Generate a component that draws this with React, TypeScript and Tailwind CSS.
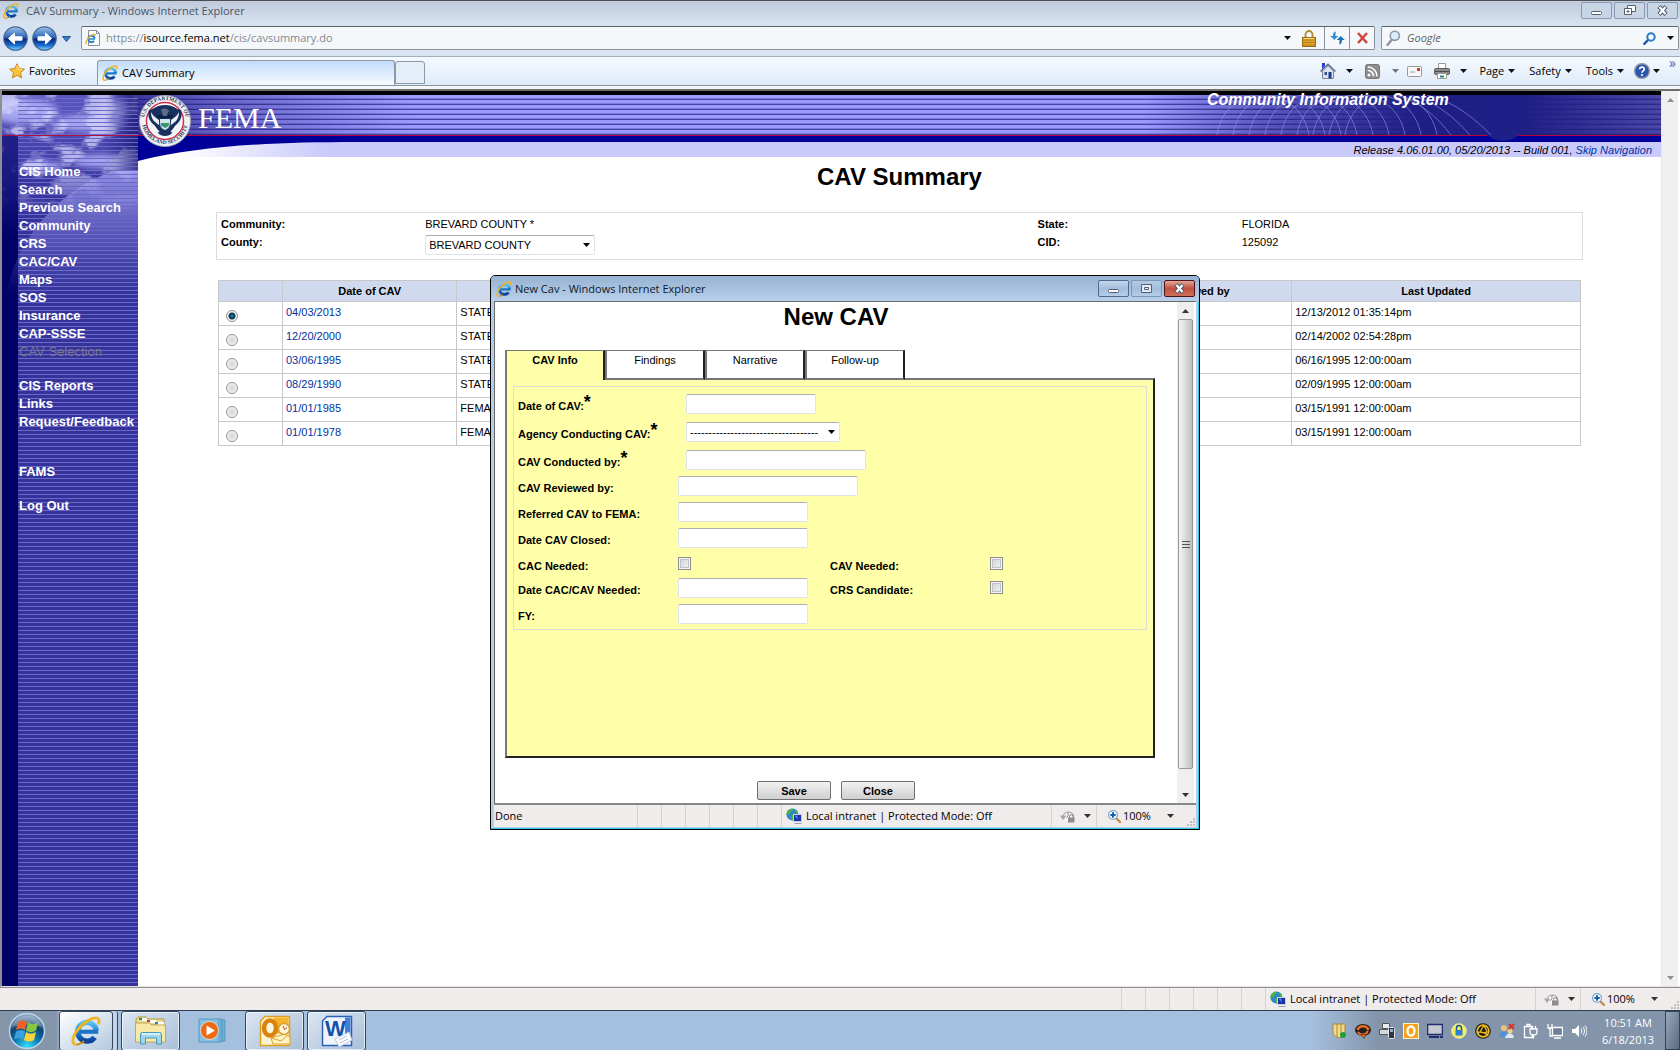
import React, { useState } from 'react';

const UI = "font-['Open_Sans','Noto_Sans',sans-serif]";
const ARIAL = "font-['Liberation_Sans',Arial,sans-serif]";

/* ---------- Icons ---------- */

const Caret = ({ color = '#111' }: { color?: string }) => (
  <svg width="7" height="4" viewBox="0 0 7 4" className="shrink-0" aria-hidden="true">
    <path d="M0 0h7L3.5 4z" fill={color} />
  </svg>
);

const IeIcon = ({ size = 16 }: { size?: number }) => (
  <svg width={size} height={size} viewBox="0 0 16 16" className="shrink-0" aria-hidden="true">
    <defs>
      <linearGradient id="ieBlue" x1="0" y1="0" x2="0" y2="1">
        <stop offset="0" stopColor="#5cc4f4" />
        <stop offset="0.55" stopColor="#1a7fd0" />
        <stop offset="1" stopColor="#0b3f93" />
      </linearGradient>
    </defs>
    <circle cx="8.6" cy="8.4" r="5" fill="none" stroke="url(#ieBlue)" strokeWidth="2.9" strokeDasharray="27.3 4.1" strokeDashoffset="-3.2" />
    <rect x="4.6" y="7.3" width="9.9" height="2.2" fill="#1b74c6" />
    <path d="M3 15.2C.2 15.6.4 11.6 3.2 7.8 6.200 3.500 11.800.2 14.200 1.200c1 .5 1 1.800.3 3.200" fill="none" stroke="#f0b323" strokeWidth="1.500" />
    <path d="M3 15.200c1.200 0 2.800-.9 4-1.900" fill="none" stroke="#c98a10" strokeWidth="1" />
  </svg>
);

const PageIcon = () => (
  <svg width="16" height="16" viewBox="0 0 16 16" aria-hidden="true">
    <path d="M3.500.5h8l3 3v12h-11z" fill="#fdfdfd" stroke="#8b8f95" />
    <path d="M11.500.5v3h3" fill="none" stroke="#8b8f95" />
    <circle cx="6.500" cy="9" r="3.200" fill="none" stroke="#2282cf" strokeWidth="2" strokeDasharray="17 3" strokeDashoffset="-2" />
    <path d="M4 9h6" stroke="#2282cf" strokeWidth="1.500" />
    <path d="M1.500 14C0 13 2 9 5 6.500S10.500 3.800 10.500 5.500" fill="none" stroke="#eeae20" strokeWidth="1.300" />
  </svg>
);

const NavButton = ({ label, flip }: { label: string; flip?: boolean }) => (
  <button aria-label={label} className="h-[25px] w-[25px] shrink-0">
    <svg width="25" height="25" viewBox="0 0 25 25" aria-hidden="true" className={flip ? '-scale-x-100' : ''}>
      <defs>
        <linearGradient id="navBlue" x1="0" y1="0" x2="0" y2="1">
          <stop offset="0" stopColor="#9ec3ea" />
          <stop offset="0.45" stopColor="#2b65b8" />
          <stop offset="0.52" stopColor="#06247a" />
          <stop offset="0.8" stopColor="#1c6fd0" />
          <stop offset="1" stopColor="#7fe0ff" />
        </linearGradient>
      </defs>
      <circle cx="12.500" cy="12.500" r="11.700" fill="url(#navBlue)" stroke="#4a6791" strokeWidth="1.200" />
      <path d="M5.500 12.500L11.500 7v3.800h7.500v3.400h-7.500V18z" fill="#fff" stroke="#fff" strokeLinejoin="round" />
    </svg>
  </button>
);

const Magnifier = ({ color, glass }: { color: string; glass: string }) => (
  <svg width="15" height="16" viewBox="0 0 15 16" aria-hidden="true">
    <path d="M5.500 10L1.500 15" stroke={color} strokeWidth="2.400" strokeLinecap="round" />
    <circle cx="8.800" cy="5.800" r="4.600" fill={glass} stroke={color} strokeWidth="1.600" />
  </svg>
);

const BlueGlass = () => (
  <svg width="13" height="13" viewBox="0 0 13 13" aria-hidden="true">
    <path d="M5 8L1.300 11.800" stroke="#1d5a9f" strokeWidth="2.400" strokeLinecap="round" />
    <circle cx="8" cy="5" r="3.700" fill="#f5fbff" stroke="#2478c4" strokeWidth="2" />
  </svg>
);

const LockIcon = () => (
  <svg width="14" height="17" viewBox="0 0 14 17" aria-hidden="true">
    <path d="M3.500 8V4.500a3.500 3.500 0 017 0V8" fill="none" stroke="#b08a2e" strokeWidth="1.800" />
    <rect x="0.500" y="7.500" width="13" height="9" fill="#e0a52c" stroke="#9c6c10" />
    <path d="M1 10h12M1 12.500h12M1 15h12" stroke="#b97f18" />
    <path d="M2 8.500h10" stroke="#ffe08a" />
  </svg>
);

const RefreshIcon = () => (
  <svg width="15" height="14" viewBox="0 0 15 14" aria-hidden="true">
    <path d="M6 .5C3.500 1 3 2.500 3 5H.3l4 4 4-4H5.500c0-1.500-.2-3 .5-4.500z" fill="#2f8edb" />
    <path d="M9 13.500c2.500-.5 3-2 3-4.500h2.700l-4-4-4 4h2.800c0 1.500.2 3-.5 4.500z" fill="#1f6cb8" />
  </svg>
);

const StarIcon = () => (
  <svg width="16" height="16" viewBox="0 0 16 16" aria-hidden="true">
    <path d="M8 .8l2.200 4.800 5.200.6-3.900 3.500 1.100 5.200L8 12.300l-4.600 2.600 1.100-5.200L.6 6.200l5.200-.6z" fill="#fbc437" stroke="#c9811a" />
    <path d="M8 2.500l1.500 3.700 3.500.5" fill="none" stroke="#fff0ae" />
  </svg>
);

const HomeIcon = () => (
  <svg width="16" height="16" viewBox="0 0 16 16" aria-hidden="true">
    <path d="M2.500 8v7.500h11V8L8 2.500z" fill="#dbe1ee" stroke="#7f8796" />
    <path d="M.5 8.500L8 1.200l7.500 7.300" fill="none" stroke="#5a6a90" strokeWidth="1.500" />
    <path d="M2 0h3v3L2 6z" fill="#2b3ccf" />
    <path d="M8.500 9h3v6.500h-3z" fill="#173b8c" />
    <path d="M4.500 9h2.500v3H4.500z" fill="#2e4f8f" />
  </svg>
);

const RssIcon = () => (
  <svg width="15" height="15" viewBox="0 0 15 15" aria-hidden="true">
    <rect x="0.500" y="0.500" width="14" height="14" rx="2" fill="#8d8d8d" stroke="#777" />
    <circle cx="4" cy="11" r="1.500" fill="#fff" />
    <path d="M2.800 6.500a5.700 5.700 0 015.700 5.700M2.800 3a9.200 9.200 0 019.200 9.200" fill="none" stroke="#fff" strokeWidth="1.600" />
  </svg>
);

const MailIcon = () => (
  <svg width="15" height="11" viewBox="0 0 15 11" aria-hidden="true">
    <rect x="0.500" y="0.500" width="14" height="10" rx="1" fill="#f7f7f7" stroke="#9a9a9a" />
    <rect x="10" y="2" width="3" height="3" fill="#d8392b" />
    <path d="M3 6h5" stroke="#9a9a9a" />
  </svg>
);

const PrinterIcon = () => (
  <svg width="16" height="16" viewBox="0 0 16 16" aria-hidden="true">
    <path d="M4.500.5h7v6h-7z" fill="#fff" stroke="#999" />
    <rect x="0.500" y="5.500" width="15" height="6" rx="1.500" fill="#8b8b8b" stroke="#5f5f5f" />
    <path d="M1 8.500h14" stroke="#4a4a4a" />
    <path d="M3.500 10.500h9v5h-9z" fill="#fff" stroke="#999" />
    <path d="M6 12.500h2v2H6z" fill="#2775c9" />
    <path d="M8 12.500h2v2H8z" fill="#2fa04a" />
  </svg>
);

const HelpIcon = () => (
  <svg width="16" height="16" viewBox="0 0 16 16" aria-hidden="true">
    <circle cx="8" cy="8" r="7.300" fill="#2a55b0" stroke="#8d93a3" strokeWidth="1.400" />
    <path d="M5.600 6.200c.2-3 5-2.700 4.700 0-.2 1.700-2.300 1.600-2.300 3.500" fill="none" stroke="#fff" strokeWidth="1.700" />
    <circle cx="8" cy="12" r="1.100" fill="#fff" />
  </svg>
);

const IntranetIcon = () => (
  <svg width="17" height="16" viewBox="0 0 17 16" aria-hidden="true">
    <circle cx="6.500" cy="6.500" r="6" fill="#2f86c4" />
    <path d="M2 2.500c2-2 4-2 5-1.300C6 3 4 3.500 3.500 6 2 6 1 7 1 8 0 6 .5 4 2 2.500zM6 7c2-1 3 0 3 2l-3 3.500c-1-1-1-4 0-5.500zM9 1.500c2 1 3 3 3 5-2 0-3-3-3-5z" fill="#48b548" />
    <rect x="7.500" y="6.500" width="8" height="7" fill="#1733a8" stroke="#c7d0dd" />
    <path d="M8.500 7.500h3v4z" fill="#5f83e6" />
    <path d="M9 15h6l1 1H8z" fill="#9aa3ae" />
  </svg>
);

const ProtectedIcon = () => (
  <svg width="16" height="14" viewBox="0 0 16 14" aria-hidden="true">
    <path d="M3 8a5.500 5.500 0 0110.500-1.500A5.500 5.500 0 018 13" fill="#fafafa" stroke="#a9a9a9" strokeWidth="1.200" />
    <path d="M8 3v4l-2 2" fill="none" stroke="#8b8b8b" />
    <path d="M0 6.500h6.500L3 11z" fill="#a5a5a5" />
    <path d="M9.500 9V7.500a1.800 1.800 0 013.600 0V9" fill="none" stroke="#777" />
    <rect x="8" y="8.500" width="6.500" height="5" fill="#8d8d8d" />
  </svg>
);

const ZoomIcon = () => (
  <svg width="13" height="13" viewBox="0 0 13 13" aria-hidden="true">
    <path d="M8 8l4 4" stroke="#c48a4a" strokeWidth="2.400" strokeLinecap="round" />
    <circle cx="5" cy="5" r="4.400" fill="#fff" stroke="#7fa3cc" strokeWidth="1.200" />
    <path d="M5 2.300v5.400M2.300 5h5.400" stroke="#1760b8" strokeWidth="2" />
  </svg>
);

const Seal = () => (
  <svg width="52" height="52" viewBox="0 0 52 52" className="shrink-0" aria-hidden="true">
    <defs>
      <path id="sealTop" d="M6.200 33A21 21 0 1145.800 33" />
      <path id="sealBottom" d="M3.200 29A23 23 0 0048.800 29" />
    </defs>
    <circle cx="26" cy="26" r="25.500" fill="#f2f2f2" stroke="#a7a9b0" />
    <circle cx="26" cy="26" r="18.500" fill="#fff" stroke="#d0304c" strokeWidth="1.500" />
    <circle cx="26" cy="26" r="16.500" fill="#f0f4f8" />
    <path d="M10 15c4 0 7-5 16-5s12 5 16 5c2 7-1 11-4 14-3 2-4 5-5 9-3 4-11 4-14 0-1-4-2-7-5-9-3-3-6-7-4-14z" fill="#17305e" />
    <path d="M12 17c0 8 4 10 8 13l3-2c-3-4-8-5-11-11zM40 17c0 8-4 10-8 13l-3-2c3-4 8-5 11-11z" fill="#e9eef5" />
    <path d="M18 20h16v3H18z" fill="#0c2148" />
    <path d="M22 15c1-2 6-2 7 0l2 1-2 1-1 4h-4z" fill="#5d6c88" />
    <path d="M20.500 23.500h11v5c0 4-3 6-5.500 7-2.500-1-5.500-3-5.500-7z" fill="#cfe5e8" stroke="#17305e" />
    <path d="M21.500 28h9l-1 3-3 2-4-2z" fill="#3f9a5a" />
    <path d="M21.500 29h4v3z" fill="#2d86c0" />
    <path d="M15 32l5 5M37 32l-5 5" stroke="#fff" strokeWidth="1.500" />
    <text fontFamily="Liberation Serif" fontSize="5.500" fontWeight="bold" fill="#26355c">
      <textPath href="#sealTop" startOffset="50%" textAnchor="middle">U.S. DEPARTMENT OF</textPath>
    </text>
    <text fontFamily="Liberation Serif" fontSize="5.500" fontWeight="bold" fill="#26355c">
      <textPath href="#sealBottom" startOffset="50%" textAnchor="middle">HOMELAND SECURITY</textPath>
    </text>
  </svg>
);

/* ---------- Window chrome ---------- */

const glyphs = {
  min: <rect x="3.500" y="8.500" width="10" height="3" rx="1" fill="#fff" stroke="#555d70" />,
  restore: (
    <g fill="#fff" stroke="#555d70">
      <path d="M6.500 2.500h8v6h-8z" />
      <path d="M3.500 5.500h7v6h-7z" />
      <path d="M6 8h2v1H6z" />
    </g>
  ),
  max: (
    <g fill="#e4ecf6" stroke="#555d70">
      <path d="M3.500 3.500h10v8h-10z" />
      <path d="M6.500 6.500h4v2h-4z" />
    </g>
  ),
  close: (
    <g>
      <path d="M5 3.500l7 8M12 3.500l-7 8" stroke="#555d70" strokeWidth="4.200" />
      <path d="M5.500 4l6 7M11.500 4l-6 7" stroke="#fff" strokeWidth="2.200" />
    </g>
  ),
};

const WindowButton = ({ kind, label, className }: { kind: keyof typeof glyphs; label: string; className: string }) => (
  <button aria-label={label} className={`flex h-[17px] w-[31px] items-center justify-center rounded-[2px] border ${className}`}>
    <svg width="17" height="15" viewBox="0 0 17 15" aria-hidden="true">{glyphs[kind]}</svg>
  </button>
);

const TitleBar = () => (
  <div className="flex h-6 items-start justify-between border-t border-[#4b4d52] bg-linear-to-b from-[#bfcbdb] to-[#d6e2f0] pr-[2px] pl-[3px]">
    <div className="flex items-center gap-[7px] pt-px">
      <IeIcon />
      <span className="text-[11px] leading-[18px] text-[#4c5663]">CAV Summary - Windows Internet Explorer</span>
    </div>
    <div className="flex gap-[2px] pt-px">
      <WindowButton kind="min" label="Minimize" className="border-[#8996b4] bg-[#c8d5e5]" />
      <WindowButton kind="restore" label="Restore" className="border-[#8996b4] bg-[#c8d5e5]" />
      <WindowButton kind="close" label="Close window" className="border-[#8996b4] bg-[#c8d5e5]" />
    </div>
  </div>
);

const AddressRow = () => (
  <div className="flex h-8 items-start bg-linear-to-b from-[#d6e2f0] to-[#dae6f3] pt-[2px] pr-px pl-[3px]">
    <div className="flex gap-1">
      <NavButton label="Back" />
      <NavButton label="Forward" flip />
    </div>
    <button aria-label="Recent pages" className="flex h-[26px] w-[24px] items-center pl-[5px]">
      <svg width="9" height="6" viewBox="0 0 9 6" aria-hidden="true">
        <path d="M.5.5h8l-4 5z" fill="#3a7fc4" stroke="#24548c" />
      </svg>
    </button>
    <div className="flex h-6 flex-1 items-center rounded-[2px] border border-[#8a929c] border-t-[#5c636c] bg-[#f4f8fb]">
      <div className="flex flex-1 items-center gap-[5px] pl-[3px]">
        <PageIcon />
        <span className="text-[11px] leading-4 text-[#85898e]">
          https://<span className="text-black">isource.fema.net</span>/cis/cavsummary.do
        </span>
      </div>
      <button aria-label="Address history" className="px-[11px]"><Caret /></button>
      <LockIcon />
      <button aria-label="Refresh" className="ml-2 flex h-full w-[25px] items-center justify-center border-l border-[#8a929c]"><RefreshIcon /></button>
      <button aria-label="Stop" className="flex h-full w-[25px] items-center justify-center border-l border-[#8a929c]">
        <svg width="11" height="12" viewBox="0 0 11 12" aria-hidden="true">
          <path d="M1 1l9 10M10 1L1 11" stroke="#d04540" strokeWidth="2.600" />
        </svg>
      </button>
    </div>
    <div className="ml-[6px] flex h-6 w-[298px] items-center rounded-[2px] border border-[#8a929c] border-t-[#5c636c] bg-[#f4f8fb] pl-1">
      <Magnifier color="#8c97a5" glass="#d9ecf8" />
      <input aria-label="Search" placeholder="Google" className="min-w-0 flex-1 bg-transparent pl-[6px] text-[11px] leading-4 italic outline-none placeholder:text-[#5c5f63]" />
      <BlueGlass />
      <button aria-label="Search options" className="pr-1 pl-[11px]"><Caret /></button>
    </div>
  </div>
);

const CommandBar = () => (
  <div className="flex h-[30px] items-stretch border-t border-b border-t-[#a4afbc] border-b-[#8a949f] bg-linear-to-b from-[#f5f9fe] to-[#dfebf8]">
    <button className="flex w-[97px] items-center gap-1 pb-px pl-[9px] text-[11px] leading-4"><StarIcon />Favorites</button>
    <button className="mt-[3px] flex w-[298px] items-center gap-1 rounded-t-[3px] border border-b-0 border-[#8d98a5] bg-linear-to-b from-[#c1dbfa] to-[#f7fbff] pl-1 text-[11px] leading-4">
      <IeIcon />CAV Summary
    </button>
    <button aria-label="New tab" className="mt-1 mb-px w-[30px] rounded-t-[3px] border border-[#8d98a5] bg-[#e6eff9]" />
    <div className="flex flex-1 items-center justify-end text-[11px] leading-4">
      <HomeIcon />
      <span className="px-[10px]"><Caret /></span>
      <span className="pl-[2px]"><RssIcon /></span>
      <span className="pr-2 pl-3"><Caret color="#777" /></span>
      <MailIcon />
      <span className="pl-3"><PrinterIcon /></span>
      <span className="px-[10px]"><Caret /></span>
      <button className="flex items-center gap-1 pr-[14px] pl-[2px]">Page <Caret /></button>
      <button className="flex items-center gap-1 pr-[14px]">Safety <Caret /></button>
      <button className="flex items-center gap-1 pr-[10px]">Tools <Caret /></button>
      <HelpIcon />
      <span className="pr-[9px] pl-[3px]"><Caret /></span>
      <span className="self-start pr-1 text-sm leading-3 text-[#5365a5]">»</span>
    </div>
  </div>
);

const StatusBar = ({ text }: { text?: string }) => (
  <div className="flex h-[22px] items-stretch bg-[#f0ecec] text-[11px] leading-[22px]">
    <div className="flex-1 pl-px">{text}</div>
    {[0, 1, 2, 3, 4, 5].map((i) => (
      <div key={i} className="w-6 border-l border-[#d5d2d0]" />
    ))}
    <div className="flex w-[270px] items-center gap-[3px] border-l border-[#d5d2d0] pl-1 whitespace-nowrap">
      <IntranetIcon />Local intranet | Protected Mode: Off
    </div>
    <div className="flex w-[45px] items-center gap-2 border-l border-[#d5d2d0] pl-2">
      <ProtectedIcon /><Caret color="#333" />
    </div>
    <div className="relative flex w-[100px] items-center border-l border-[#d5d2d0] pl-[11px]">
      <ZoomIcon /><span className="w-[46px] pl-[2px]">100%</span><Caret color="#333" />
      <svg width="9" height="9" viewBox="0 0 9 9" className="absolute right-0 bottom-0" aria-hidden="true">
        <path d="M6 0h2v2H6zM3 3h2v2H3zM6 3h2v2H6zM0 6h2v2H0zM3 6h2v2H3zM6 6h2v2H6z" fill="#c3bfbf" />
      </svg>
    </div>
  </div>
);

/* ---------- CIS page ---------- */

const navGroups = [
  ['CIS Home', 'Search', 'Previous Search', 'Community', 'CRS', 'CAC/CAV', 'Maps', 'SOS', 'Insurance', 'CAP-SSSE', 'CAV Selection'],
  ['CIS Reports', 'Links', 'Request/Feedback'],
  ['FAMS'],
  ['Log Out'],
];

const SkyArt = () => (
  <svg width="136" height="240" viewBox="0 0 136 240" className="absolute top-0 left-0" aria-hidden="true">
    <defs>
      <linearGradient id="skyFade" x1="0" y1="0" x2="0" y2="1">
        <stop offset="0" stopColor="#fff" />
        <stop offset="0.3" stopColor="#fff" />
        <stop offset="0.5" stopColor="#000" />
      </linearGradient>
      <linearGradient id="skyBase" x1="0" y1="0" x2="0" y2="1">
        <stop offset="0" stopColor="#5a57c0" />
        <stop offset="0.35" stopColor="#3a379f" />
        <stop offset="0.6" stopColor="#3a379f" stopOpacity="0" />
      </linearGradient>
      <linearGradient id="skyRight" x1="0" y1="0" x2="1" y2="0">
        <stop offset="0.75" stopColor="#14146a" stopOpacity="0" />
        <stop offset="1" stopColor="#14146a" stopOpacity="0.75" />
      </linearGradient>
      <linearGradient id="planet" x1="0" y1="0" x2="0" y2="1">
        <stop offset="0" stopColor="#a9a9f6" stopOpacity="0.85" />
        <stop offset="0.4" stopColor="#7c7ad8" stopOpacity="0" />
      </linearGradient>
      <filter id="puff"><feGaussianBlur stdDeviation="3" /></filter>
      <filter id="cloud" x="0" y="0" width="100%" height="100%">
        <feTurbulence type="fractalNoise" baseFrequency="0.035 0.05" numOctaves="4" seed="4" />
        <feColorMatrix values="0 0 0 0 0.68  0 0 0 0 0.68  0 0 0 0 0.97  6 0 0 0 -2.8" />
      </filter>
      <mask id="skyMask"><rect width="136" height="240" fill="url(#skyFade)" /></mask>
    </defs>
    <rect width="136" height="240" fill="url(#skyBase)" />
    <g mask="url(#skyMask)">
      <g fill="#a6a5f0" filter="url(#puff)">
        <ellipse cx="22" cy="16" rx="34" ry="13" />
        <ellipse cx="88" cy="28" rx="36" ry="9" />
        <ellipse cx="112" cy="14" rx="16" ry="10" />
        <ellipse cx="40" cy="72" rx="22" ry="6" />
        <ellipse cx="100" cy="66" rx="30" ry="7" />
      </g>
      <rect width="136" height="120" filter="url(#cloud)" opacity="0.75" />
    </g>
    <circle cx="168" cy="234" r="168" fill="url(#planet)" />
    <rect y="41" width="16" height="110" fill="#000066" opacity="0.55" />
    <rect width="136" height="75" fill="url(#skyRight)" />
    <path d="M0 40.500h136" stroke="#b01040" />
  </svg>
);

const Sidebar = () => (
  <nav className="relative w-[136px] shrink-0 overflow-hidden bg-[linear-gradient(90deg,#000066_16px,#333399_16px)]">
    <SkyArt />
    <div className="absolute inset-y-0 right-0 left-4 bg-[repeating-linear-gradient(180deg,transparent_0px,transparent_3px,#6c69ca_3px,#6c69ca_4px)]" />
    <div className="relative flex flex-col gap-4 pt-[68px] pl-[17px]">
      {navGroups.map((group, i) => (
        <ul key={group[0]} className={i === 2 ? 'pt-4' : ''}>
          {group.map((item) => (
            <li key={item} className="text-[13px] leading-[18px] whitespace-nowrap">
              {item === 'CAV Selection' ? (
                <span className="text-[#77778a]">{item}</span>
              ) : (
                <a href="#" className="font-bold text-white">{item}</a>
              )}
            </li>
          ))}
        </ul>
      ))}
    </div>
  </nav>
);

const Banner = () => (
  <header className="relative">
    <div className="flex h-10 items-start justify-end bg-[repeating-linear-gradient(180deg,transparent_0px,transparent_3px,rgba(30,30,120,0.25)_3px,rgba(30,30,120,0.25)_4px,rgba(30,30,120,0.7)_4px,rgba(30,30,120,0.7)_5px),linear-gradient(90deg,#3d38a0_0%,#6a66cc_6%,#9a9aff_18%,#9a9aff_66%,#5a57c0_74%,#1f1f88_84%,#1f1f88_91%,#4a47a8_100%)]">
      <svg width="340" height="50" viewBox="0 0 340 50" aria-hidden="true" className="absolute top-0 right-[116px]">
        <circle cx="298" cy="22" r="24" fill="#1f1f88" />
        <g fill="none" stroke="#8f8de0" strokeOpacity="0.65">
          {[0, 1, 2, 3, 4, 5, 6, 7, 8].map((i) => (
            <path key={i} d={`M${12 + i * 16} 40C${20 + i * 16} -14 ${94 + i * 16} -14 ${104 + i * 16} 40`} />
          ))}
          <path d="M190 0c25 6 42 22 56 40M205 0c25 6 44 22 60 40M222 0c26 6 46 22 64 40" />
        </g>
      </svg>
      <div className="relative w-[454px] text-base leading-[10px] font-bold whitespace-nowrap text-white italic">Community Information System</div>
    </div>
    <div className="h-px bg-[#b8003c]" />
    <div className="h-[6px] bg-[#000099]" />
    <div className="h-[15px] bg-[linear-gradient(90deg,#ffffff_0px,#ffffff_40px,#c9c9fb_190px)] pr-[9px] text-right text-[11px] leading-4 italic">
      Release 4.06.01.00, 05/20/2013 -- Build 001, <a href="#" className="text-[#0033a0]">Skip Navigation</a>
    </div>
    <svg width="220" height="26" viewBox="0 0 220 26" className="absolute top-[41px] left-0" aria-hidden="true">
      <path d="M0 0h220v6C130 6 60 10 0 25z" fill="#000099" />
    </svg>
    <div className="absolute top-0 left-px flex items-start gap-[7px]">
      <Seal />
      <span className="pt-[5px] font-['Liberation_Serif',serif] text-[30px] leading-9 text-white">FEMA</span>
    </div>
  </header>
);

const visits = [
  { date: '04/03/2013', agency: 'STATE', updated: '12/13/2012 01:35:14pm' },
  { date: '12/20/2000', agency: 'STATE', updated: '02/14/2002 02:54:28pm' },
  { date: '03/06/1995', agency: 'STATE', updated: '06/16/1995 12:00:00am' },
  { date: '08/29/1990', agency: 'STATE', updated: '02/09/1995 12:00:00am' },
  { date: '01/01/1985', agency: 'FEMA', updated: '03/15/1991 12:00:00am' },
  { date: '01/01/1978', agency: 'FEMA', updated: '03/15/1991 12:00:00am' },
];

const SelectBox = ({ id, options, className }: { id: string; options: string[]; className: string }) => (
  <div className={`relative h-5 ${className}`}>
    <select id={id} className="block h-5 w-full appearance-none rounded-[2px] border border-[#dfe2e8] border-t-[#abadb3] bg-white pl-[3px] text-[11px] leading-4">
      {options.map((o) => <option key={o}>{o}</option>)}
    </select>
    <span className="pointer-events-none absolute top-0 right-[5px] flex h-5 items-center"><Caret color="#000" /></span>
  </div>
);

const CommunityPanel = () => (
  <section className="grid h-12 grid-cols-[15%_45%_15%_25%] content-start items-start border border-[#dcdcdc] pt-[2px] pl-1 text-[11px] leading-[18px]">
    <span className="font-bold">Community:</span>
    <span>BREVARD COUNTY *</span>
    <span className="font-bold">State:</span>
    <span>FLORIDA</span>
    <label htmlFor="county" className="font-bold">County:</label>
    <div className="pt-[2px]"><SelectBox id="county" options={['BREVARD COUNTY']} className="w-[170px]" /></div>
    <span className="font-bold">CID:</span>
    <span>125092</span>
  </section>
);

const VisitTable = () => {
  const [selected, setSelected] = useState(0);

  return (
    <table className="w-full table-fixed border-collapse text-[11px] leading-4">
      <colgroup>
        <col className="w-[4.7%]" />
        <col className="w-[12.8%]" />
        <col className="w-[47.3%]" />
        <col className="w-[14%]" />
        <col className="w-[21.2%]" />
      </colgroup>
      <thead>
        <tr className="h-[21px] bg-[#d0daee]">
          {['', 'Date of CAV', '', 'Reviewed by', 'Last Updated'].map((h, i) => (
            <th key={i} className="border border-[#c8c8c8] p-0 font-bold">{h}</th>
          ))}
        </tr>
      </thead>
      <tbody>
        {visits.map((v, i) => (
          <tr key={v.date} className="h-6 align-top">
            <td className="border border-[#c8c8c8] p-0 pt-2 pl-[7px]">
              <input
                type="radio"
                name="visit"
                aria-label={v.date}
                checked={selected === i}
                onChange={() => setSelected(i)}
                className="block h-3 w-3 appearance-none rounded-full border border-[#8e8f8f] bg-[radial-gradient(circle,#d9dce0_0px,#d9dce0_3px,#f4f4f4_4px)] checked:bg-[radial-gradient(circle_at_center,#2aa3cf_0px,#0c3a5c_2px,#0c3a5c_3px,#f4f4f4_4px)]"
              />
            </td>
            <td className="border border-[#c8c8c8] p-0 pt-[2px] pl-[3px]"><a href="#" className="text-[#0033a0]">{v.date}</a></td>
            <td className="border border-[#c8c8c8] p-0 pt-[2px] pl-[3px]">{v.agency}</td>
            <td className="border border-[#c8c8c8] p-0" />
            <td className="border border-[#c8c8c8] p-0 pt-[2px] pl-[3px]">{v.updated}</td>
          </tr>
        ))}
      </tbody>
    </table>
  );
};

const ScrollArrow = ({ down, color }: { down?: boolean; color: string }) => (
  <span className="flex h-[17px] w-full items-center justify-center">
    <svg width="7" height="4" viewBox="0 0 7 4" className={down ? '' : '-scale-y-100'} aria-hidden="true">
      <path d="M0 0h7L3.500 4z" fill={color} />
    </svg>
  </span>
);

/* ---------- New CAV pop-up ---------- */

const tabs = ['CAV Info', 'Findings', 'Narrative', 'Follow-up'];

const boxClass = 'block h-5 rounded-[2px] border border-[#dfe2e8] border-t-[#abadb3] bg-white px-1 text-[11px] leading-4';

interface FieldProps {
  id: string;
  label: string;
  required?: boolean;
  height?: string;
  children: React.ReactNode;
}

const Field = ({ id, label, required, height = 'h-[26px]', children }: FieldProps) => (
  <div className={`flex items-start ${height}`}>
    <label htmlFor={id} className={`flex h-6 shrink-0 items-start leading-6 font-bold whitespace-nowrap ${required ? 'w-[168px]' : 'w-40'}`}>
      {label}:{required && <span className="text-lg leading-4">*</span>}
    </label>
    {children}
  </div>
);

const Tick = ({ id }: { id: string }) => (
  <input id={id} type="checkbox" className="mt-[3px] block h-[13px] w-[13px] appearance-none border border-[#8e8f8f] bg-linear-to-br from-[#cbcfd5] to-[#f6f6f6] shadow-[inset_0_0_0_1px_#f4f4f4,inset_0_0_0_2px_#bfc2c7]" />
);

const CavInfoForm = () => (
  <form className="border border-[#dcdcdc] pt-[7px] pb-[5px] pl-1 text-[11px]">
    <Field id="date" label="Date of CAV" required height="h-7">
      <input id="date" className={`${boxClass} w-[130px]`} />
    </Field>
    <Field id="agency" label="Agency Conducting CAV" required height="h-7">
      <SelectBox id="agency" options={['-----------------------------------']} className="w-[154px]" />
    </Field>
    <Field id="conducted" label="CAV Conducted by" required>
      <input id="conducted" className={`${boxClass} w-[180px]`} />
    </Field>
    <Field id="reviewed" label="CAV Reviewed by">
      <input id="reviewed" className={`${boxClass} w-[180px]`} />
    </Field>
    <Field id="referred" label="Referred CAV to FEMA">
      <input id="referred" className={`${boxClass} w-[130px]`} />
    </Field>
    <Field id="closed" label="Date CAV Closed">
      <input id="closed" className={`${boxClass} w-[130px]`} />
    </Field>
    <div className="grid grid-cols-[312px_1fr]">
      <Field id="cac" label="CAC Needed" height="h-6"><Tick id="cac" /></Field>
      <Field id="cav" label="CAV Needed" height="h-6"><Tick id="cav" /></Field>
      <Field id="needed" label="Date CAC/CAV Needed">
        <input id="needed" className={`${boxClass} w-[130px]`} />
      </Field>
      <Field id="crs" label="CRS Candidate"><Tick id="crs" /></Field>
    </div>
    <Field id="fy" label="FY" height="h-5">
      <input id="fy" className={`${boxClass} w-[130px]`} />
    </Field>
  </form>
);

const NewCavWindow = () => {
  const [active, setActive] = useState(0);

  return (
    <div role="dialog" aria-label="New CAV" className="absolute top-[275px] left-[490px] flex h-[555px] w-[710px] flex-col rounded-t-[5px] border border-black bg-[#b6cde6] shadow-[inset_-1px_-1px_0_#35c5ea]">
      <div className={`flex h-[25px] items-center justify-between rounded-t-[4px] bg-linear-to-b from-[#97b2d2] to-[#b8d0ea] pr-1 pl-[5px] ${UI}`}>
        <div className="flex items-center gap-[3px] text-[11px] leading-4 text-[#0c1a2b]"><IeIcon />New Cav - Windows Internet Explorer</div>
        <div className="flex gap-[2px]">
          <WindowButton kind="min" label="Minimize pop-up" className="border-[#50698c] bg-linear-to-b from-[#c6d8ec] via-[#a2bedb] to-[#b4cee9]" />
          <WindowButton kind="max" label="Maximize pop-up" className="border-[#7d97b8] bg-linear-to-b from-[#b5cbe3] via-[#a2bedb] to-[#b4cee9]" />
          <WindowButton kind="close" label="Close pop-up" className="border-[#4c1418] bg-linear-to-b from-[#e3a597] via-[#c0503f] to-[#d0705a]" />
        </div>
      </div>
      <div className="mx-[3px] flex min-h-0 flex-1 border-t border-l border-[#696969] bg-white pr-[2px]">
        <div className="min-w-0 flex-1">
          <h2 className="pt-[3px] text-center text-2xl leading-6 font-bold">New CAV</h2>
          <div className="pt-[21px] pr-[22px] pl-[10px]">
            <div role="tablist" className="relative z-10 -mb-[2px] flex">
              {tabs.map((tab, i) => (
                <button
                  key={tab}
                  role="tab"
                  aria-selected={active === i}
                  onClick={() => setActive(i)}
                  className={
                    active === i
                      ? 'flex h-[30px] w-[100px] justify-center border-t border-r-2 border-l-2 border-t-[#777] border-r-[#222] border-l-[#777] bg-[#ffffaa] pt-px text-[11px] leading-4 font-bold'
                      : 'flex h-[30px] w-[100px] justify-center border-t border-r-2 border-b-2 border-l-2 border-t-[#777] border-r-[#222] border-b-[#777] border-l-[#777] bg-white pt-px text-[11px] leading-4'
                  }
                >
                  {tab}
                </button>
              ))}
            </div>
            <div role="tabpanel" className="h-[380px] border-2 border-t-[#777] border-r-[#222] border-b-[#222] border-l-[#777] bg-[#ffffaa] p-[6px]">
              <CavInfoForm />
            </div>
          </div>
          <div className="flex justify-center gap-[10px] pt-[23px]">
            {['Save', 'Close'].map((label) => (
              <button key={label} className="h-[19px] w-[74px] rounded-[2px] border border-[#707070] bg-linear-to-b from-[#f2f2f2] to-[#cfcfcf] text-[11px] leading-4 font-bold">{label}</button>
            ))}
          </div>
        </div>
        <div className="flex w-[17px] flex-col bg-[#efefef]">
          <ScrollArrow color="#333" />
          <div className="mx-px flex flex-1 flex-col items-center justify-center gap-[2px] rounded-[2px] border border-[#979797] bg-linear-to-r from-[#f5f5f5] via-[#dadbde] to-[#bfc0c4]">
            <span className="h-px w-2 bg-[#555]" />
            <span className="h-px w-2 bg-[#555]" />
            <span className="h-px w-2 bg-[#555]" />
          </div>
          <div className="flex h-[34px] items-end"><ScrollArrow down color="#333" /></div>
        </div>
      </div>
      <div className={`mx-[3px] mb-[2px] border-t-2 border-[#888] ${UI}`}>
        <StatusBar text="Done" />
      </div>
    </div>
  );
};

/* ---------- Taskbar ---------- */

const StartOrb = () => (
  <svg width="38" height="38" viewBox="0 0 38 38" aria-hidden="true">
    <defs>
      <radialGradient id="orb" cx="0.5" cy="0.95" r="0.9">
        <stop offset="0" stopColor="#38e0ff" />
        <stop offset="0.45" stopColor="#0a6fa8" />
        <stop offset="0.7" stopColor="#0f4470" />
        <stop offset="1" stopColor="#8aa5c2" />
      </radialGradient>
    </defs>
    <circle cx="19" cy="19" r="17.500" fill="url(#orb)" stroke="#b9d3e6" strokeWidth="1.500" />
    <path d="M4 15c4-15 26-15 30 0-8-3-22-3-30 0z" fill="#fff" opacity="0.25" />
    <path d="M10 10c3-2 6-2 9 0l-2 8c-3-2-6-2-9 0z" fill="#f0612a" />
    <path d="M20 10.500c3 2 6 2 10 0l-2 8c-4 2-7 2-10 0z" fill="#8cc63f" />
    <path d="M8 19.500c3-2 6-2 9 0l-2 8c-3-2-6-2-9 0z" fill="#3fa0e0" />
    <path d="M18 20c3 2 6 2 10 0l-2 8c-4 2-7 2-10 0z" fill="#fdd33a" />
  </svg>
);

const FolderIcon = () => (
  <svg width="34" height="32" viewBox="0 0 34 32" aria-hidden="true">
    <path d="M2 4l2-2h8l2 2h16v6H2z" fill="#ead98e" stroke="#b79b45" />
    <path d="M8 3h5v3H8zM16 5h6v3h-6zM24 7h6v3h-6z" fill="#fff" />
    <path d="M5 3h3v2H5z" fill="#1d9e3a" />
    <path d="M13 5h3v2h-3z" fill="#d0392b" />
    <path d="M21 7h3v2h-3z" fill="#2a82d0" />
    <path d="M1.500 8h14l2 2h14v17h-30z" fill="#f7e9a8" stroke="#c3a856" />
    <path d="M6.500 29V19.500a2 2 0 012-2h17a2 2 0 012 2V29h-5v-6h-11v6z" fill="#9fd5ea" stroke="#4a96b8" />
    <path d="M8 19h18" stroke="#e5f7ff" strokeWidth="1.500" />
  </svg>
);

const PlayerIcon = () => (
  <svg width="30" height="28" viewBox="0 0 30 28" aria-hidden="true">
    <path d="M1 2h20v23H1z" fill="#86bfe0" stroke="#5599c0" />
    <path d="M21 2h3v23h-3M24 3h3v21h-3" fill="#6fb0d6" stroke="#5599c0" />
    <circle cx="11.500" cy="13.500" r="9" fill="#ee6a12" stroke="#fff" strokeOpacity="0.6" />
    <path d="M8.500 8.500l8.500 5-8.500 5z" fill="#fff" />
  </svg>
);

const OutlookIcon = () => (
  <svg width="32" height="32" viewBox="0 0 32 32" aria-hidden="true">
    <path d="M6 1.500h24.500v29h-29V6z" fill="#fdf3d0" stroke="#e0a01c" strokeWidth="1.500" />
    <path d="M15 2.500h14.500v16H15z" fill="#f3b32c" />
    <ellipse cx="11" cy="13" rx="6" ry="7.500" fill="#fdf6df" stroke="#d9820c" strokeWidth="4.500" />
    <path d="M12 23l14-4 5 3v7H14z" fill="#fff3c4" stroke="#d9a537" />
    <path d="M12 23l10 3 7-6" fill="none" stroke="#d9a537" />
    <circle cx="25" cy="14" r="5.500" fill="#fff8dc" stroke="#dca22c" strokeWidth="1.500" />
    <path d="M24 11l1.500 3.500 2.500-2" fill="none" stroke="#b5442a" />
  </svg>
);

const WordIcon = () => (
  <svg width="32" height="32" viewBox="0 0 32 32" aria-hidden="true">
    <path d="M6 1.500h24.500v29h-29V6z" fill="#eef4fd" stroke="#2c62b4" strokeWidth="1.500" />
    <path d="M24 2.500h5.500v18H24z" fill="#3f7fd6" />
    <text x="4" y="21" fontFamily="Liberation Sans" fontSize="22" fontWeight="bold" fill="#1550a8">W</text>
    <path d="M14 24l14-7 3 8-13 7z" fill="#fff" stroke="#b6c7e2" />
    <path d="M18 25l8-4M19 28l8-4" stroke="#aebfdc" />
  </svg>
);

const trayIcons = [
  { name: 'Shield', art: <><path d="M2 1h12v8c0 3-3 5-6 6-3-1-6-3-6-6z" fill="#f3d98a" stroke="#a98a3a" /><path d="M6 1v13M10 1v13" stroke="#a98a3a" /><circle cx="12" cy="12" r="3" fill="#1f9e3c" /></> },
  { name: 'Sync', art: <><ellipse cx="8" cy="7" rx="8" ry="6" fill="#26201c" /><path d="M2.500 7c2-5 9-5 11 0" fill="none" stroke="#ee6a2a" strokeWidth="2.500" /><path d="M3 9c2 4 8 3 10-1" fill="none" stroke="#ee6a2a" strokeWidth="2" /><path d="M6 11.500h5l-2 4z" fill="#ee6a2a" stroke="#26201c" strokeWidth="0.500" /></> },
  { name: 'Devices', art: <><path d="M3.500.5h7v5h-7z" fill="#e9ecef" stroke="#555" /><path d="M.5 6.500h9v5h-9z" fill="#d5d9dd" stroke="#555" /><rect x="9.500" y="4.500" width="6" height="11" rx="1" fill="#2d3344" stroke="#dfe3ea" /><path d="M11 6h3v3h-3z" fill="#9db1cc" /></> },
  { name: 'Outlook', art: <><rect x="0.500" y="0.500" width="15" height="15" fill="#f5a31d" stroke="#fff1c8" /><ellipse cx="8" cy="8" rx="3.500" ry="4.500" fill="none" stroke="#fff" strokeWidth="2.300" /></> },
  { name: 'Display', art: <><rect x="0.500" y="1.500" width="15" height="10" fill="#c5c8cf" stroke="#232a70" strokeWidth="1.500" /><path d="M2 14h10M13 14h3" stroke="#232a70" strokeWidth="2" /></> },
  { name: 'Key lock', art: <><circle cx="8" cy="8" r="7.300" fill="#f3ee55" stroke="#e8e8b0" /><path d="M5.500 7V5a2.500 2.500 0 015 0v2" fill="none" stroke="#1d4fa8" strokeWidth="1.500" /><rect x="4.500" y="7" width="7" height="5.500" fill="#2f7fd8" /></> },
  { name: 'Antivirus', art: <><circle cx="8" cy="8" r="7.800" fill="#1d1a10" /><circle cx="8" cy="8" r="5.800" fill="none" stroke="#e8b82a" strokeWidth="1.800" /><path d="M9 2L5 9l-3 1M5 9l5 1 3 3M9 2l3 7-2 1" fill="none" stroke="#e8b82a" strokeWidth="1.400" /></> },
  { name: 'Messenger', art: <><circle cx="5" cy="5" r="3" fill="#e8c27a" /><path d="M0 14c0-7 9-7 10 0z" fill="#4f93d6" /><circle cx="11" cy="8" r="2.500" fill="#f0d08a" /><path d="M6 15c1-6 9-6 9 0z" fill="#dfe7f2" /><path d="M10 1l5 5M15 1l-5 5" stroke="#d33528" strokeWidth="2" /></> },
  { name: 'Power', art: <><path d="M1.500 3.500h8v11h-8zM4 1.500h3v2H4z" fill="none" stroke="#fff" strokeWidth="1.300" /><path d="M7 6h7v3c0 2-1.500 3-3.500 3S7 11 7 9zM8.500 3v3M12.500 3v3M10.500 12v3.500" fill="#8394ab" stroke="#fff" strokeWidth="1.300" /></> },
  { name: 'Network', art: <><path d="M5.500 4.500h10v8h-10z" fill="#6d7f98" stroke="#fff" strokeWidth="1.300" /><path d="M7 15h7M1 1v4h4V1M3 5v8h3" fill="none" stroke="#fff" strokeWidth="1.300" /></> },
  { name: 'Volume', art: <><path d="M1 6h3l4-4v12l-4-4H1z" fill="#fff" /><path d="M10 5.500c1 1.500 1 3.500 0 5M12 4c2 2.500 2 5.500 0 8M14 2.500c2.500 3.500 2.500 7.500 0 11" fill="none" stroke="#fff" /></> },
];

const taskButton = 'flex h-10 w-[59px] items-center justify-center rounded-[3px] border border-[#32475e] bg-linear-to-br from-[#dbe6f2] to-[#a9bfd9] shadow-[inset_0_0_0_1px_rgba(255,255,255,0.6)]';

const Taskbar = () => (
  <footer className={`flex h-10 shrink-0 items-center border-t border-[#2c3e52] bg-[linear-gradient(90deg,#8595aa_0px,#8595aa_56px,#a5c0de_62px,#a5c0de_78%,#8495ab_82%)] ${UI}`}>
    <button aria-label="Start" className="flex w-[59px] justify-center pr-[6px]"><StartOrb /></button>
    <div className="flex h-10 gap-[3px]">
      <div className="flex rounded-r-[3px] border-r border-[#32475e] bg-[#c3d3e5] pr-1">
        <button aria-label="Internet Explorer" className="flex h-10 w-[54px] items-center justify-center rounded-[3px] border border-[#32475e] bg-linear-to-br from-white to-[#b3c8df]"><IeIcon size={30} /></button>
      </div>
      <button aria-label="Windows Explorer" className={taskButton}><FolderIcon /></button>
      <button aria-label="Media Player" className="flex h-10 w-[59px] items-center justify-center"><PlayerIcon /></button>
      <button aria-label="Outlook" className={taskButton}><OutlookIcon /></button>
      <button aria-label="Word" className={taskButton}><WordIcon /></button>
    </div>
    <div className="ml-auto flex items-center gap-2">
      {trayIcons.map((t) => (
        <svg key={t.name} width="16" height="16" viewBox="0 0 16 16" role="img" aria-label={t.name}>{t.art}</svg>
      ))}
    </div>
    <div className="w-[78px] pl-1 text-center text-[11px] leading-[17px] text-white">
      <div>10:51 AM</div>
      <div>6/18/2013</div>
    </div>
    <button aria-label="Show desktop" className="h-full w-[15px] border border-[#33435a] bg-linear-to-br from-[#9aa9bc] to-[#596a82]" />
  </footer>
);

export default function App() {
  return (
    <div className={`relative flex h-screen flex-col overflow-hidden bg-white text-black ${ARIAL}`}>
      <div className={`shrink-0 ${UI}`}>
        <TitleBar />
        <AddressRow />
        <CommandBar />
      </div>
      <div className="h-[3px] shrink-0 bg-[#f3f6fa]" />
      <div className="flex min-h-0 flex-1 border-t-2 border-b border-l-2 border-t-[#6e6e6e] border-b-[#e3e3e3] border-l-[#8f8f8f] pr-[2px]">
        <div className="flex min-w-0 flex-1 flex-col">
          <div className="h-1 shrink-0 bg-black" />
          <div className="flex min-h-0 flex-1">
            <Sidebar />
            <div className="min-w-0 flex-1">
              <Banner />
              <main className="px-[78px]">
                <h1 className="pt-[6px] text-center text-2xl leading-7 font-bold">CAV Summary</h1>
                <div className="pt-[21px]"><CommunityPanel /></div>
                <div className="px-[2px] pt-5"><VisitTable /></div>
              </main>
            </div>
          </div>
        </div>
        <div className="flex w-[17px] flex-col justify-between border-l border-[#e6e6e6] bg-[#f0f0f0]">
          <ScrollArrow color="#8f8f8f" />
          <ScrollArrow down color="#8f8f8f" />
        </div>
      </div>
      <div className={`shrink-0 border-t border-[#8f8f8f] ${UI}`}>
        <StatusBar />
      </div>
      <Taskbar />
      <NewCavWindow />
    </div>
  );
}
